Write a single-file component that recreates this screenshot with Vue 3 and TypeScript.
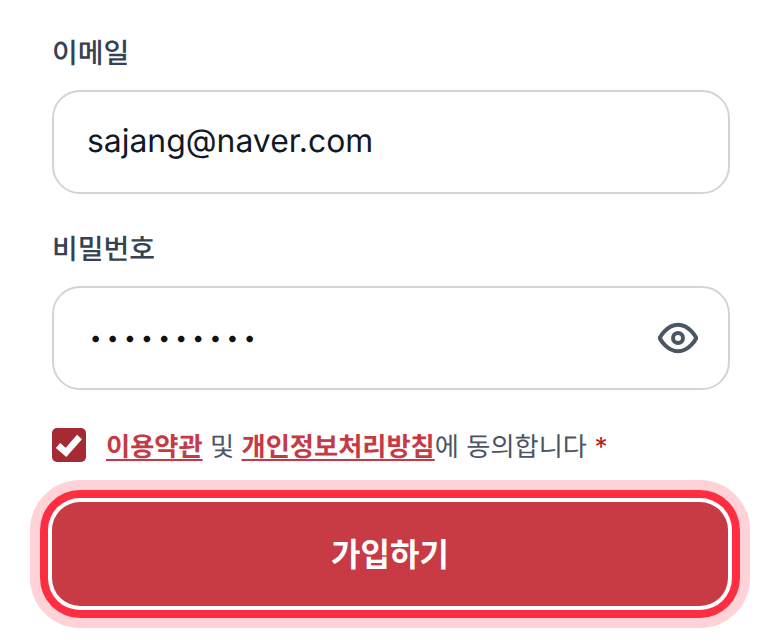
<script setup lang="ts">
import { ref } from "vue";

const email = ref("sajang@naver.com");
const password = ref("password12");
const agreed = ref(true);
</script>

<template>
  <form class="form" @submit.prevent>
    <div class="field">
      <label class="label" for="email">이메일</label>
      <div class="control">
        <input id="email" v-model="email" class="input" type="email" />
      </div>
    </div>
    <div class="field">
      <label class="label" for="password">비밀번호</label>
      <div class="control">
        <input id="password" v-model="password" class="input secret" type="password" />
        <button class="eye" type="button" aria-label="비밀번호 표시">
          <svg viewBox="0 0 24 24" width="40" height="40" fill="none" stroke="currentColor" stroke-width="2.4" stroke-linecap="round" stroke-linejoin="round">
            <path d="M1 12s4-8 11-8 11 8 11 8-4 8-11 8-11-8-11-8z" />
            <circle cx="12" cy="12" r="3" />
          </svg>
        </button>
      </div>
    </div>
    <label class="agree">
      <span class="box" :class="{ on: agreed }">
        <input v-model="agreed" class="native" type="checkbox" />
        <svg viewBox="0 0 34 34" width="34" height="34" fill="none" stroke="#fff" stroke-width="6.5">
          <path d="M6 17.5 L14 24.5 L27.5 9" />
        </svg>
      </span>
      <span class="agree-text"><a class="link">이용약관</a> 및 <a class="link">개인정보처리방침</a>에 동의합니다 <span class="req">*</span></span>
    </label>
    <button class="submit" type="submit">가입하기</button>
  </form>
</template>

<style scoped>
.form {
  box-sizing: border-box;
  width: 780px;
  height: 642px;
  padding: 33px 50px 0 52px;
  background: #fff;
  font-family: Inter, "Noto Sans CJK KR", sans-serif;
  text-rendering: geometricPrecision;
  overflow: hidden;
}
.field {
  margin-bottom: 35px;
}
.label {
  display: block;
  height: 40px;
  margin-bottom: 17px;
  font-size: 28px;
  line-height: 40px;
  font-weight: 500;
  color: #374151;
}
.control {
  position: relative;
}
.input {
  display: block;
  box-sizing: border-box;
  width: 100%;
  height: 104px;
  padding: 0 33px 4px;
  border: 2px solid #d1d5db;
  border-radius: 28px;
  outline: none;
  background: #fff;
  color: #111827;
  font-family: inherit;
  text-rendering: geometricPrecision;
  font-size: 31.9px;
}
.secret {
  padding-bottom: 0;
  padding-left: 35.7px;
  font-size: 21px;
  letter-spacing: 5.3px;
  color: #111;
}
.eye {
  position: absolute;
  top: 32px;
  right: 32px;
  width: 40px;
  height: 40px;
  padding: 0;
  border: 0;
  background: none;
  color: #4b5563;
}
.eye svg {
  display: block;
}
.agree {
  display: flex;
  align-items: center;
  gap: 20px;
  height: 36px;
  margin-top: 37px;
  font-size: 26.25px;
  color: #4b5563;
}
.box {
  position: relative;
  flex: none;
  width: 34px;
  height: 34px;
  border-radius: 5px;
  background: #a52a33;
}
.box svg {
  display: block;
}
.native {
  position: absolute;
  inset: 0;
  margin: 0;
  opacity: 0;
}
.link {
  font-weight: 600;
  color: #c53a44;
  text-decoration: underline;
  text-decoration-thickness: 2px;
  text-underline-offset: 3px;
}
.req {
  color: #b91c1c;
}
.submit {
  display: block;
  width: 676px;
  height: 104px;
  margin-top: 39px;
  padding: 0 0 5px;
  border: 0;
  border-radius: 28px;
  background: #c83a44;
  color: #fff;
  font-family: inherit;
  font-size: 32px;
  font-weight: 700;
  box-shadow: 0 0 0 4px #fff, 0 0 0 12px #ff2d42, 0 0 0 22px #ffd2d8;
}
</style>
